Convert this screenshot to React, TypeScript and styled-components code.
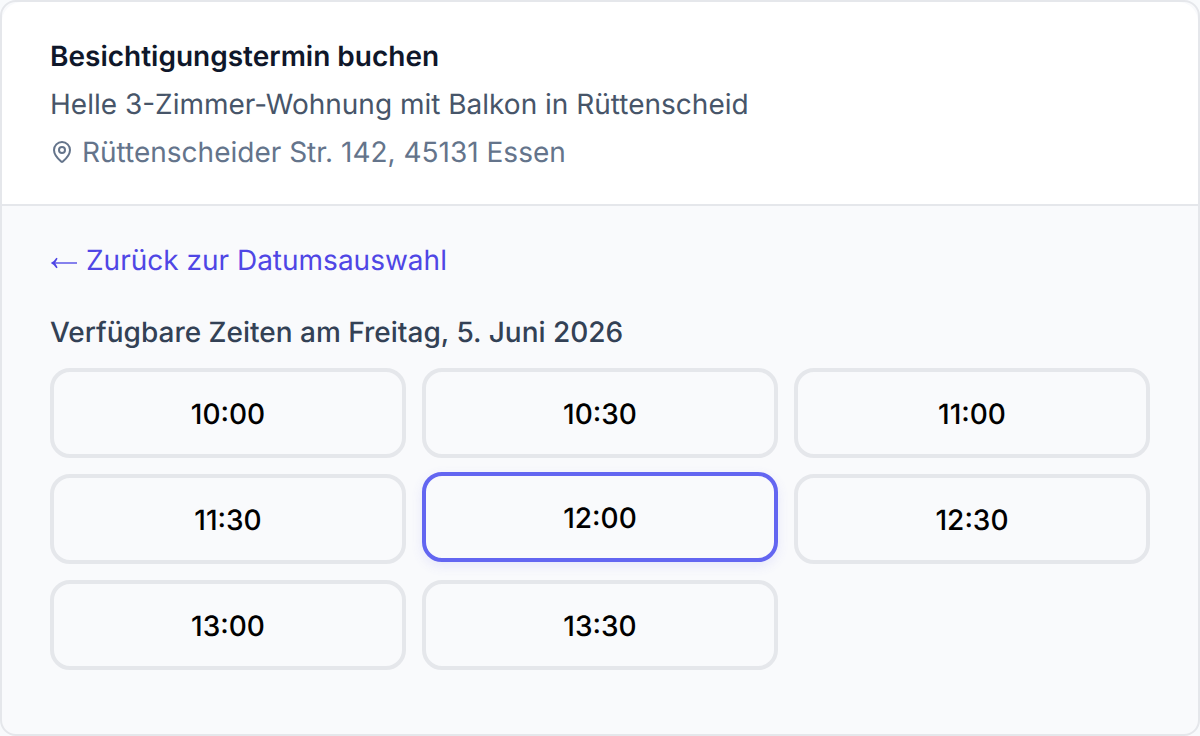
import React, { useState } from "react";
import styled, { createGlobalStyle } from "styled-components";
import { MapPin } from "lucide-react";

const GlobalStyle = createGlobalStyle`
  *, *::before, *::after { box-sizing: border-box; }
  html, body, #root { height: 100%; }
  body {
    margin: 0;
    background: #f8fafc;
    font-family: Inter, "Liberation Sans", sans-serif;
    font-size: 28px;
    line-height: 40px;
    text-rendering: geometricPrecision;
  }
`;

const Card = styled.main`
  display: flex;
  flex-direction: column;
  min-height: 100%;
  border: 2px solid #e5e7eb;
  border-radius: 16px;
  background: #f9fafc;
`;

const Header = styled.header`
  display: flex;
  flex-direction: column;
  gap: 8px;
  padding: 34px 48px 32px;
  background: #ffffff;
  border-bottom: 2px solid #e5e7eb;
  border-radius: 20px 20px 0 0;
`;

const Title = styled.h1`
  margin: 0;
  font-size: 28px;
  font-weight: 600;
  color: #0f172a;
`;

const Listing = styled.p`
  margin: 0;
  color: #475569;
`;

const Address = styled.address`
  display: flex;
  align-items: center;
  gap: 8px;
  font-style: normal;
  color: #64748b;

  svg { flex: none; }
`;

const Body = styled.section`
  display: flex;
  flex-direction: column;
  align-items: flex-start;
  gap: 32px;
  padding: 34px 48px 64px;
`;

const BackLink = styled.a`
  display: flex;
  align-items: center;
  gap: 8px;
  color: #4f46e5;
  text-decoration: none;

  svg { flex: none; }
`;

const Slots = styled.fieldset`
  width: 100%;
  min-width: 0;
  margin: 0;
  padding: 0;
  border: 0;
`;

const SlotsLabel = styled.legend`
  padding: 0;
  margin-bottom: 16px;
  font-weight: 500;
  color: #334155;
`;

const SlotGrid = styled.div`
  display: grid;
  grid-template-columns: repeat(3, minmax(0, 1fr));
  gap: 16px;
`;

const SlotButton = styled.button<{ $active: boolean }>`
  height: 90px;
  padding: 2px 0 0;
  border: 4px solid ${(p) => (p.$active ? "#6366f1" : "#e5e7eb")};
  border-radius: 20px;
  background: ${(p) => (p.$active ? "#f9fafc" : "transparent")};
  color: #000000;
  font: inherit;
  font-weight: 500;
  text-rendering: inherit;
  cursor: pointer;
  transform: ${(p) => (p.$active ? "translateY(-2px)" : "none")};
  box-shadow: ${(p) => (p.$active ? "0 4px 12px rgba(99, 102, 241, 0.12)" : "none")};
`;

const times = ["10:00", "10:30", "11:00", "11:30", "12:00", "12:30", "13:00", "13:30"];

function BackArrow() {
  return (
    <svg width="28" height="20" viewBox="0 0 28 20" aria-hidden="true">
      <path d="M4 12.2H27V13.8H4Z" fill="currentColor" opacity="0.85" />
      <path d="M0.8 13Q4.6 11 6.4 7.8L7.6 8.6Q6.4 11 5 13Q6.4 15 7.6 17.4L6.4 18.2Q4.6 15 0.8 13Z" fill="currentColor" />
    </svg>
  );
}

export default function App() {
  const [selected, setSelected] = useState("12:00");
  return (
    <>
      <GlobalStyle />
      <Card>
        <Header>
          <Title>Besichtigungstermin buchen</Title>
          <Listing>Helle 3-Zimmer-Wohnung mit Balkon in Rüttenscheid</Listing>
          <Address>
            <MapPin size={24} strokeWidth={2} aria-hidden="true" />
            Rüttenscheider Str. 142, 45131 Essen
          </Address>
        </Header>
        <Body>
          <BackLink href="#datum">
            <BackArrow />
            Zurück zur Datumsauswahl
          </BackLink>
          <Slots>
            <SlotsLabel>Verfügbare Zeiten am Freitag, 5. Juni 2026</SlotsLabel>
            <SlotGrid>
              {times.map((time) => (
                <SlotButton
                  key={time}
                  type="button"
                  $active={time === selected}
                  aria-pressed={time === selected}
                  onClick={() => setSelected(time)}
                >
                  {time}
                </SlotButton>
              ))}
            </SlotGrid>
          </Slots>
        </Body>
      </Card>
    </>
  );
}
